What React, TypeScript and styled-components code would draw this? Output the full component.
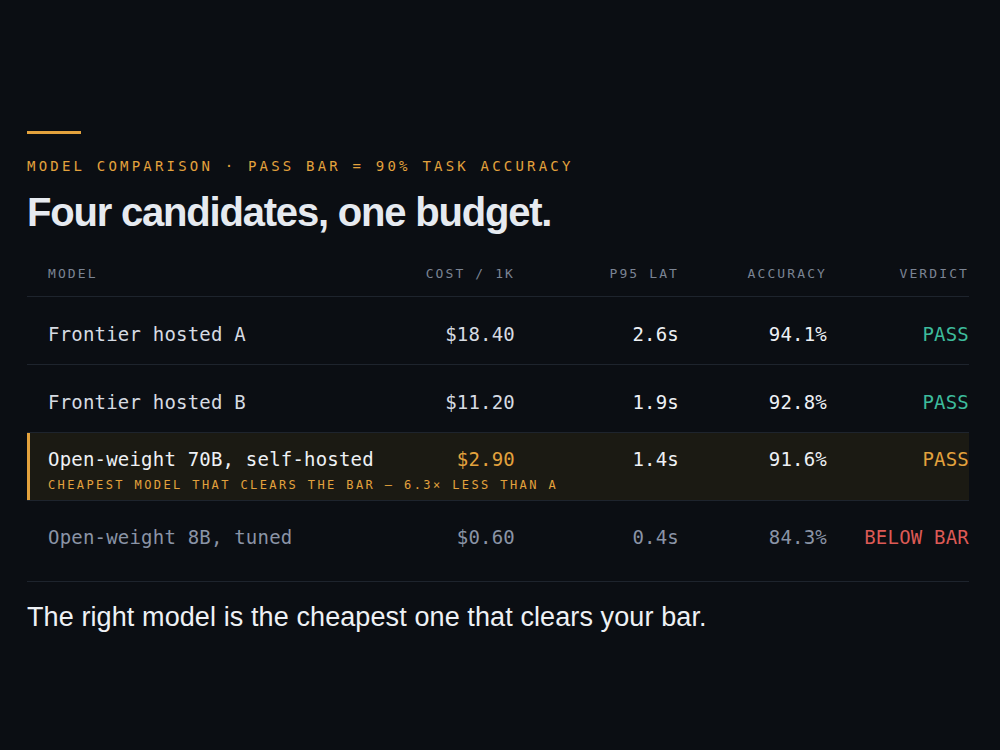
import React from "react";
import styled, { createGlobalStyle } from "styled-components";

const GlobalStyle = createGlobalStyle`
  html, body {
    margin: 0;
    padding: 0;
    background: #0b0e13;
  }
  body {
    font-family: "Liberation Sans", Arial, sans-serif;
  }
`;

const MONO = `"DejaVu Sans Mono", "Liberation Mono", monospace`;

const colors = {
  bg: "#0b0e13",
  orange: "#e3a23d",
  text: "#e6eaf0",
  row: "#d6dbe2",
  muted: "#8a94a6",
  label: "#7b8493",
  line: "#1e242d",
  teal: "#3dbb9c",
  red: "#dc5a55",
  highlight: "#1b1a13",
};

const Page = styled.main`
  width: 1000px;
  height: 750px;
  box-sizing: border-box;
  padding: 131px 31px 0 27px;
  background: ${colors.bg};
  display: flex;
  flex-direction: column;
`;

const AccentBar = styled.div`
  width: 54px;
  height: 3px;
  background: ${colors.orange};
`;

const Eyebrow = styled.div`
  margin-top: 22px;
  font-family: ${MONO};
  font-size: 14px;
  line-height: 20px;
  letter-spacing: 3.2px;
  color: ${colors.orange};
  text-transform: uppercase;
`;

const Title = styled.h1`
  margin: 12px 0 0;
  font-family: "Liberation Sans", Arial, sans-serif;
  font-weight: 700;
  font-size: 40px;
  line-height: 48px;
  letter-spacing: -1.2px;
  color: ${colors.text};
`;

const Table = styled.section`
  margin-top: 30px;
  display: flex;
  flex-direction: column;
  border-bottom: 1px solid ${colors.line};
  padding-bottom: 14px;
`;

const grid = `
  display: grid;
  grid-template-columns: 1fr 120px 164px 148px 142px;
  align-items: center;
`;

const HeaderRow = styled.div`
  ${grid}
  padding: 0 0 14px 21px;
  border-bottom: 1px solid ${colors.line};
`;

const HeadCell = styled.div<{ $align?: "left" | "right" }>`
  font-family: ${MONO};
  font-size: 13px;
  line-height: 16px;
  letter-spacing: 2.1px;
  color: ${colors.label};
  text-align: ${(p) => p.$align ?? "right"};
`;

const Row = styled.div<{ $highlight?: boolean; $last?: boolean }>`
  ${grid}
  row-gap: 6px;
  padding: ${(p) =>
    p.$highlight ? "15px 0 7px 21px" : p.$last ? "25px 0 18px 21px" : "26px 0 18px 21px"};
  border-bottom: ${(p) => (p.$last ? "none" : `1px solid ${colors.line}`)};
  background: ${(p) => (p.$highlight ? colors.highlight : "transparent")};
  box-shadow: ${(p) => (p.$highlight ? `inset 3px 0 0 ${colors.orange}` : "none")};
`;

type Tone = "normal" | "muted" | "orange" | "teal" | "red";

const toneColor = (t: Tone, fallback: string) =>
  t === "muted"
    ? colors.muted
    : t === "orange"
    ? colors.orange
    : t === "teal"
    ? colors.teal
    : t === "red"
    ? colors.red
    : fallback;

const Cell = styled.div<{ $align?: "left" | "right"; $tone: Tone; $bright?: boolean }>`
  font-family: ${MONO};
  font-size: 19px;
  line-height: 23px;
  letter-spacing: 0.2px;
  white-space: nowrap;
  text-align: ${(p) => p.$align ?? "right"};
  color: ${(p) => toneColor(p.$tone, p.$bright ? "#eef1f5" : colors.row)};
`;

const Note = styled.div`
  grid-column: 1 / -1;
  font-family: ${MONO};
  font-size: 12px;
  line-height: 16px;
  letter-spacing: 2.4px;
  color: ${colors.orange};
  text-transform: uppercase;
  white-space: nowrap;
`;

const Footer = styled.p`
  margin: 19px 0 0;
  font-family: "Liberation Sans", Arial, sans-serif;
  font-size: 27px;
  line-height: 32px;
  letter-spacing: 0.1px;
  color: #eef1f5;
`;

type Model = {
  name: string;
  cost: string;
  lat: string;
  acc: string;
  verdict: string;
  verdictTone: Tone;
  tone: Tone;
  highlight?: boolean;
  note?: string;
};

const models: Model[] = [
  { name: "Frontier hosted A", cost: "$18.40", lat: "2.6s", acc: "94.1%", verdict: "PASS", verdictTone: "teal", tone: "normal" },
  { name: "Frontier hosted B", cost: "$11.20", lat: "1.9s", acc: "92.8%", verdict: "PASS", verdictTone: "teal", tone: "normal" },
  {
    name: "Open-weight 70B, self-hosted",
    cost: "$2.90",
    lat: "1.4s",
    acc: "91.6%",
    verdict: "PASS",
    verdictTone: "orange",
    tone: "normal",
    highlight: true,
    note: "Cheapest model that clears the bar — 6.3× less than A",
  },
  { name: "Open-weight 8B, tuned", cost: "$0.60", lat: "0.4s", acc: "84.3%", verdict: "BELOW BAR", verdictTone: "red", tone: "muted" },
];

export default function App() {
  return (
    <>
      <GlobalStyle />
      <Page>
        <AccentBar />
        <Eyebrow>Model comparison · Pass bar = 90% task accuracy</Eyebrow>
        <Title>Four candidates, one budget.</Title>
        <Table>
          <HeaderRow>
            <HeadCell $align="left">MODEL</HeadCell>
            <HeadCell>COST / 1K</HeadCell>
            <HeadCell>P95 LAT</HeadCell>
            <HeadCell>ACCURACY</HeadCell>
            <HeadCell>VERDICT</HeadCell>
          </HeaderRow>
          {models.map((m, i) => (
            <Row key={m.name} $highlight={m.highlight} $last={i === models.length - 1}>
              <Cell $align="left" $tone={m.tone} $bright={m.highlight}>
                {m.name}
              </Cell>
              <Cell $tone={m.highlight ? "orange" : m.tone}>{m.cost}</Cell>
              <Cell $tone={m.tone} $bright>
                {m.lat}
              </Cell>
              <Cell $tone={m.tone} $bright>
                {m.acc}
              </Cell>
              <Cell $tone={m.verdictTone}>{m.verdict}</Cell>
              {m.note && <Note>{m.note}</Note>}
            </Row>
          ))}
        </Table>
        <Footer>The right model is the cheapest one that clears your bar.</Footer>
      </Page>
    </>
  );
}
